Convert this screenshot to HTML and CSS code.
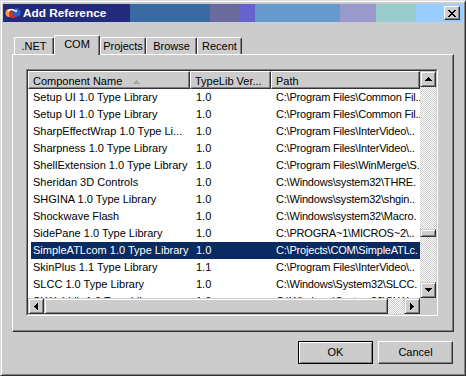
FILE: index.html
```html
<!DOCTYPE html>
<html>
<head>
<meta charset="utf-8">
<title>Add Reference</title>
<link rel="stylesheet" href="styles.css">
</head>
<body>
<div class="window">
  <div class="titlebar">
    <svg class="app-icon" width="16" height="16" viewBox="0 0 16 16">
      <circle cx="4.5" cy="8" r="4" fill="#f2a23a"/>
      <circle cx="8" cy="9" r="4" fill="#d8301e"/>
      <circle cx="11.5" cy="7.5" r="4.2" fill="#2f5fc0"/>
      <path d="M3 6c2-2 5-2 7 0" stroke="#fff" stroke-width="1.4" fill="none"/>
      <circle cx="11" cy="6" r="1.2" fill="#cfe0ff"/>
    </svg>
    <span class="title">Add Reference</span>
    <div class="close-btn">
      <svg width="8" height="7" viewBox="0 0 8 7"><path d="M0 0h2v1H0zM6 0h2v1H6zM1 1h2v1H1zM5 1h2v1H5zM2 2h4v1H2zM3 3h2v1H3zM2 4h4v1H2zM1 5h2v1H1zM5 5h2v1H5zM0 6h2v1H0zM6 6h2v1H6z" fill="#000"/></svg>
    </div>
  </div>
  <div class="client">
    <div class="tabs">
      <div class="tab tab-net">.NET</div>
      <div class="tab tab-com active">COM</div>
      <div class="tab tab-projects">Projects</div>
      <div class="tab tab-browse">Browse</div>
      <div class="tab tab-recent">Recent</div>
    </div>
    <div class="panel">
      <div class="listview">
        <div class="lv-inner">
          <div class="lv-content">
            <div class="lv-header">
              <div class="hcell hc1">Component Name<svg class="sort" width="7" height="4" viewBox="0 0 7 4"><path d="M3 0h1v1h1v1h1v1h1v1H0v-1h1v-1h1v-1h1z" fill="#a8a8a8"/></svg></div>
              <div class="hcell hc2">TypeLib Ver...</div>
              <div class="hcell hc3">Path</div>
            </div>
            <div class="row"><div class="c1">Setup UI 1.0 Type Library</div><div class="c2">1.0</div><div class="c3">C:\Program Files\Common Fil..</div></div>
            <div class="row"><div class="c1">Setup UI 1.0 Type Library</div><div class="c2">1.0</div><div class="c3">C:\Program Files\Common Fil..</div></div>
            <div class="row"><div class="c1">SharpEffectWrap 1.0 Type Li...</div><div class="c2">1.0</div><div class="c3">C:\Program Files\InterVideo\..</div></div>
            <div class="row"><div class="c1">Sharpness 1.0 Type Library</div><div class="c2">1.0</div><div class="c3">C:\Program Files\InterVideo\..</div></div>
            <div class="row"><div class="c1">ShellExtension 1.0 Type Library</div><div class="c2">1.0</div><div class="c3">C:\Program Files\WinMerge\S.</div></div>
            <div class="row"><div class="c1">Sheridan 3D Controls</div><div class="c2">1.0</div><div class="c3">C:\Windows\system32\THRE.</div></div>
            <div class="row"><div class="c1">SHGINA 1.0 Type Library</div><div class="c2">1.0</div><div class="c3">C:\Windows\system32\shgin..</div></div>
            <div class="row"><div class="c1">Shockwave Flash</div><div class="c2">1.0</div><div class="c3">C:\Windows\system32\Macro.</div></div>
            <div class="row"><div class="c1">SidePane 1.0 Type Library</div><div class="c2">1.0</div><div class="c3">C:\PROGRA~1\MICROS~2\..</div></div>
            <div class="row selected"><div class="c1">SimpleATLcom 1.0 Type Library</div><div class="c2">1.0</div><div class="c3">C:\Projects\COM\SimpleATLc.</div></div>
            <div class="row"><div class="c1">SkinPlus 1.1 Type Library</div><div class="c2">1.1</div><div class="c3">C:\Program Files\InterVideo\..</div></div>
            <div class="row"><div class="c1">SLCC 1.0 Type Library</div><div class="c2">1.0</div><div class="c3">C:\Windows\System32\SLCC.</div></div>
            <div class="row"><div class="c1">SLWebLib 1.0 Type Library</div><div class="c2">1.0</div><div class="c3">C:\Windows\System32\SLW.</div></div>
          </div>
          <div class="vscroll">
            <div class="sbtn"><svg width="7" height="4" viewBox="0 0 7 4"><path d="M3 0h1v1h1v1h1v1h1v1H0v-1h1v-1h1v-1h1z"/></svg></div>
            <div class="vtrack"><div class="vthumb"></div></div>
            <div class="sbtn"><svg width="7" height="4" viewBox="0 0 7 4"><path d="M0 0h7v1h-1v1h-1v1h-1v1h-1v-1h-1v-1h-1v-1H0z"/></svg></div>
          </div>
          <div class="hscroll">
            <div class="sbtn"><svg width="4" height="7" viewBox="0 0 4 7"><path d="M3 0h1v7h-1v-1h-1v-1h-1v-1H0V3h1V2h1V1h1z"/></svg></div>
            <div class="hthumb"></div>
            <div class="htrack"></div>
            <div class="sbtn"><svg width="4" height="7" viewBox="0 0 4 7"><path d="M0 0h1v1h1v1h1v1h1v1H3v1H2v1H1v1H0z"/></svg></div>
          </div>
          <div class="corner"></div>
        </div>
      </div>
    </div>
    <div class="buttons">
      <div class="btn default">OK</div>
      <div class="btn">Cancel</div>
    </div>
  </div>
</div>
</body>
</html>
```

FILE: styles.css
```css
* { box-sizing: border-box; }

html, body {
  margin: 0;
  padding: 0;
  background: #cccccc;
}

body {
  font-family: "Liberation Sans", Arial, sans-serif;
  font-size: 11px;
  color: #000;
}

.window {
  width: 466px;
  height: 376px;
  background: #cccccc;
  border: 1px solid;
  border-color: #dddddd #333333 #333333 #dddddd;
  box-shadow: inset 1px 1px #ffffff, inset -1px -1px #808080;
  padding: 3px 2px 2px 2px;
  display: flex;
  flex-direction: column;
}

.titlebar {
  height: 18px;
  display: flex;
  align-items: center;
  padding: 0 3px 0 2px;
  background: linear-gradient(to right,
    #222a7c 0 127px,
    #3a6aa2 127px 207px,
    #6a6a9c 207px 237px,
    #6464cc 237px 252px,
    #6699cc 252px 337px,
    #9999cc 337px 373px,
    #99cccc 373px 413px,
    #99ccff 413px);
}

.app-icon {
  flex: none;
  display: block;
}

.title {
  margin-left: 2px;
  color: #ffffff;
  font-weight: bold;
  font-size: 11.8px;
  white-space: nowrap;
}

.close-btn {
  margin-left: auto;
  width: 16px;
  height: 14px;
  background: #cccccc;
  border: 1px solid;
  border-color: #ffffff #333333 #333333 #ffffff;
  box-shadow: inset -1px -1px #808080;
  display: flex;
  align-items: center;
  justify-content: center;
  padding-right: 1px;
}

.close-btn svg { display: block; }

.client {
  padding: 13px 0 0 9px;
  display: flex;
  flex-direction: column;
}

.tabs {
  display: flex;
  align-items: flex-end;
  height: 19px;
  padding-left: 2px;
  position: relative;
  z-index: 1;
}

.tab {
  height: 17px;
  background: #cccccc;
  border-top: 1px solid #ffffff;
  border-left: 1px solid #ffffff;
  border-right: 1px solid #333333;
  border-top-left-radius: 2px;
  border-top-right-radius: 2px;
  box-shadow: inset -1px 0 #808080;
  text-align: center;
  padding-top: 2px;
  line-height: 13px;
  white-space: nowrap;
}

.tab.active {
  height: 20px;
  margin-bottom: -1px;
}

.tab-net { width: 40px; }
.tab-com { width: 46px; }
.tab-projects { width: 46px; }
.tab-browse { width: 51px; }
.tab-recent { width: 45px; }

.panel {
  width: 442px;
  height: 278px;
  border-top: 1px solid #ffffff;
  border-left: 1px solid #ffffff;
  border-right: 1px solid #333333;
  border-bottom: 1px solid #333333;
  box-shadow: inset -1px -1px #808080;
  padding: 14px 0 0 13px;
}

.listview {
  width: 412px;
  height: 247px;
  border: 1px solid;
  border-color: #808080 #ffffff #ffffff #808080;
}

.lv-inner {
  width: 410px;
  height: 245px;
  border: 1px solid;
  border-color: #333333 #cccccc #cccccc #333333;
  display: grid;
  grid-template-columns: 392px 16px;
  grid-template-rows: 227px 16px;
}

.lv-content {
  background: #ffffff;
  overflow: hidden;
}

.lv-header {
  display: flex;
  height: 18px;
}

.hcell {
  height: 18px;
  background: #cccccc;
  border-top: 1px solid #ffffff;
  border-left: 1px solid #ffffff;
  border-right: 1px solid #333333;
  border-bottom: 1px solid #333333;
  box-shadow: inset -1px -1px #808080;
  padding: 2px 0 0 4px;
  line-height: 13px;
  white-space: nowrap;
  overflow: hidden;
  display: flex;
  align-items: center;
}

.hc1 { width: 162px; }
.hc2 { width: 81px; }
.hc3 { width: 149px; }

.sort {
  display: block;
  margin-left: 11px;
  margin-top: 1px;
}

.row {
  display: flex;
  height: 17px;
  margin-left: 3px;
  line-height: 13px;
  white-space: nowrap;
}

.row > div {
  padding-top: 2px;
  overflow: hidden;
}

.row .c1 { width: 159px; padding-left: 2px; }
.row .c2 { width: 81px; padding-left: 6px; }
.row .c3 { width: 149px; padding-left: 5px; letter-spacing: -0.2px; }

.row.selected {
  background: #0a2a62;
  color: #ffffff;
}

.sbtn {
  width: 16px;
  height: 16px;
  flex: none;
  background: #cccccc;
  border: 1px solid;
  border-color: #cccccc #333333 #333333 #cccccc;
  box-shadow: inset 1px 1px #ffffff, inset -1px -1px #808080;
  display: flex;
  align-items: center;
  justify-content: center;
}

.sbtn svg { display: block; fill: #000; }

.vscroll {
  display: flex;
  flex-direction: column;
}

.vtrack {
  flex: 1;
  background: repeating-conic-gradient(#cccccc 0 25%, #ffffff 0 50%) 0 0 / 2px 2px;
  padding-top: 142px;
}

.vthumb {
  width: 16px;
  height: 8px;
  background: #cccccc;
  border: 1px solid;
  border-color: #cccccc #333333 #333333 #cccccc;
  box-shadow: inset 1px 1px #ffffff, inset -1px -1px #808080;
}

.hscroll {
  display: flex;
}

.hthumb {
  width: 344px;
  height: 16px;
  background: #cccccc;
  border: 1px solid;
  border-color: #cccccc #333333 #333333 #cccccc;
  box-shadow: inset 1px 1px #ffffff, inset -1px -1px #808080;
}

.htrack {
  flex: 1;
  background: repeating-conic-gradient(#cccccc 0 25%, #ffffff 0 50%) 0 0 / 2px 2px;
}

.corner {
  background: #cccccc;
}

.buttons {
  display: flex;
  justify-content: flex-end;
  gap: 5px;
  width: 442px;
  padding-right: 1px;
  margin-top: 9px;
}

.btn {
  width: 75px;
  height: 23px;
  background: #cccccc;
  border: 1px solid;
  border-color: #ffffff #333333 #333333 #ffffff;
  box-shadow: inset -1px -1px #808080;
  display: flex;
  align-items: center;
  justify-content: center;
  line-height: 13px;
}

.btn.default {
  border-color: #000000;
  box-shadow: inset 1px 1px #ffffff, inset -1px -1px #808080;
}
```
